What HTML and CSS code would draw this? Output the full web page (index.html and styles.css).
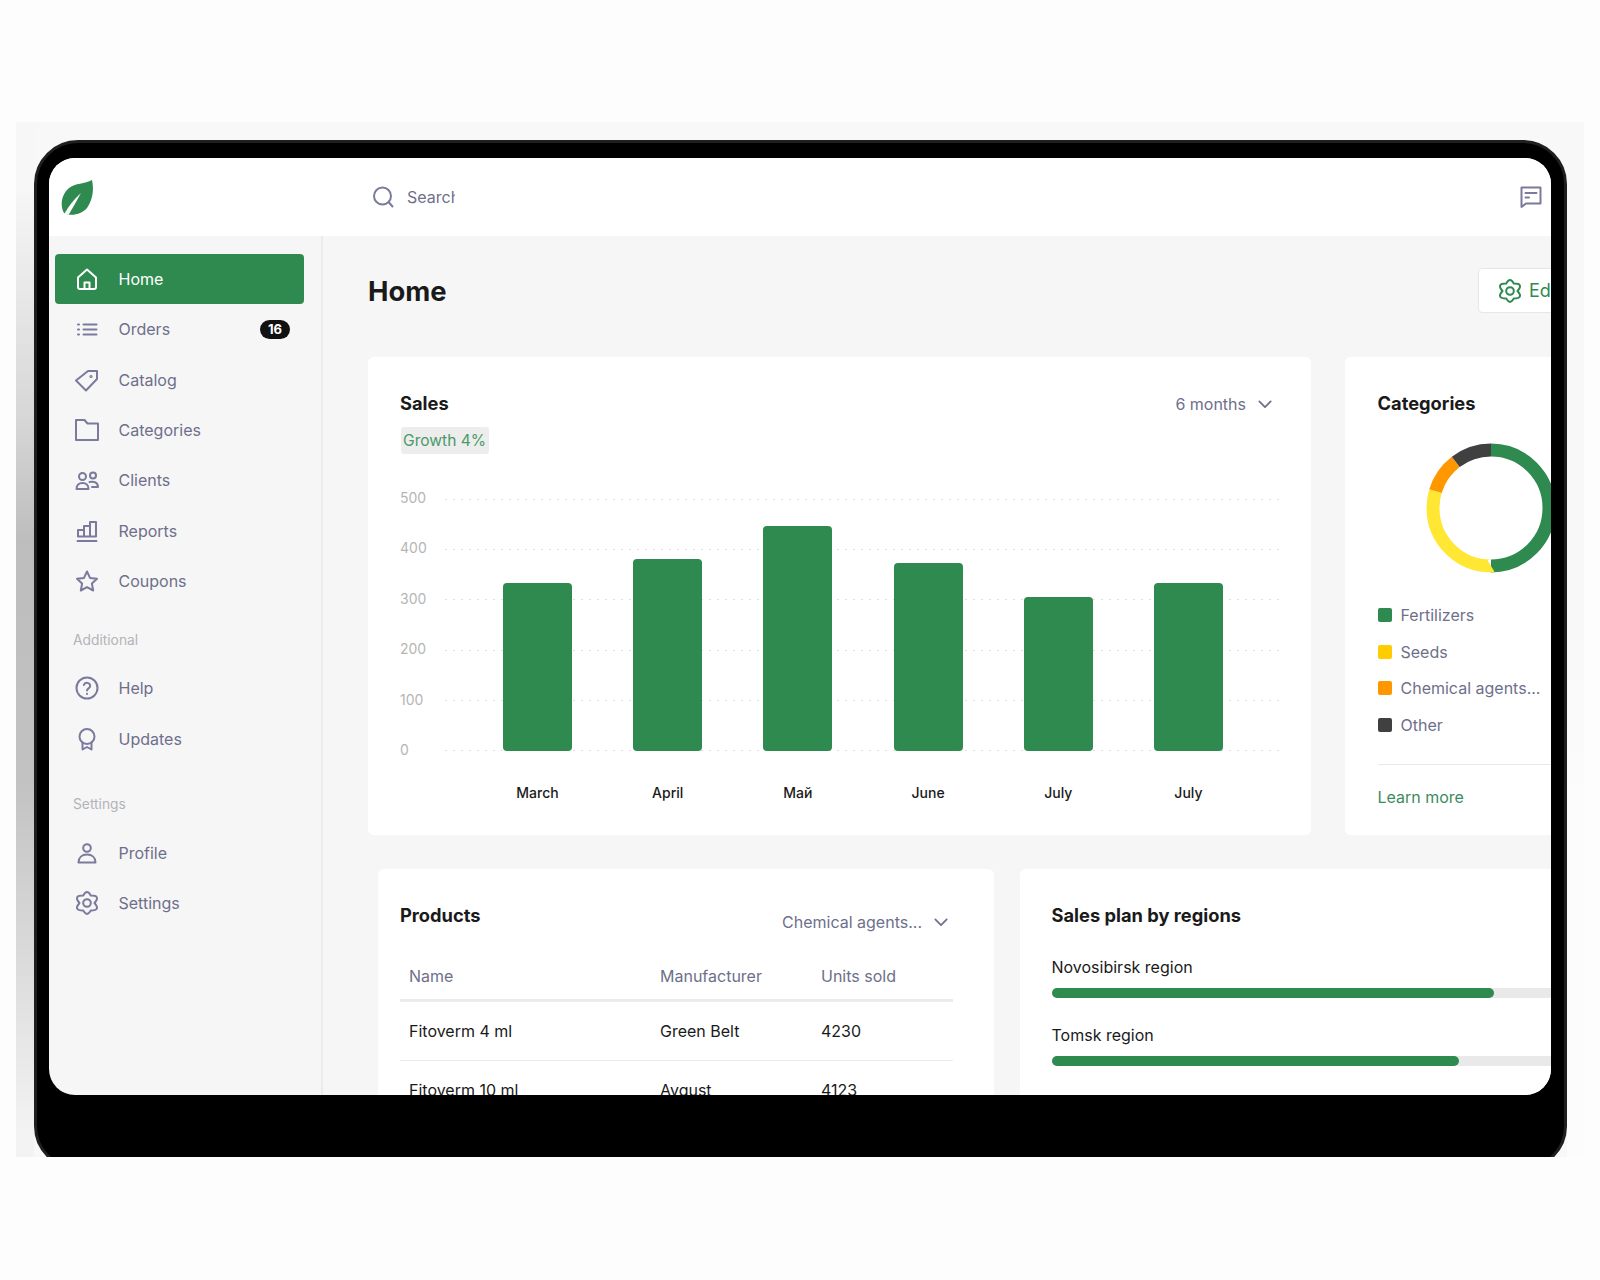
FILE: index.html
```html
<!DOCTYPE html>
<html lang="en">
<head>
  <meta charset="UTF-8">
  <title>Home</title>
  <link rel="stylesheet" href="styles.css">
</head>
<body>

<svg class="defs" width="0" height="0">
  <symbol id="gear" viewBox="0 0 24 24">
    <path d="M15.800 4.600Q12-2.500 8.200 4.600Q-2 4.500 4.500 12Q-2 19.500 8.200 19.400Q12 26.500 15.800 19.400Q26 19.500 19.500 12Q26 4.500 15.800 4.600z"/>
    <circle cx="12" cy="12" r="3.800"/>
  </symbol>
  <symbol id="chevron" viewBox="0 0 16 10">
    <path d="M1.500 1.500 8 8l6.500-6.500"/>
  </symbol>
</svg>

<div class="stage">
  <div class="device">
    <div class="screen">

      <header class="topbar">
        <div class="logo">
          <svg width="34" height="38" viewBox="0 0 34 38">
            <path class="leaf" d="M32 2C33.500 9 34 20 27 30 22 36 11 39 4 35 0 28 1 17 9 10 15 5 25 6 32 2z"/>
            <path class="vein" d="M4.500 35.500Q11 24 21 15Q15 26 8.500 37z"/>
          </svg>
        </div>
        <div class="search">
          <svg class="icon" viewBox="0 0 24 24"><circle cx="11.500" cy="11" r="8.500"/><path d="m18 17.500 3.500 4"/></svg>
          <span class="search-text">Search</span>
        </div>
        <svg class="icon chat" viewBox="0 0 24 24"><path d="M2.500 2.500h19v16H7l-4.500 3.500z"/><path d="M6.500 8h11M6.500 12.500h3.500"/></svg>
      </header>

      <div class="app">
        <nav class="sidebar">
          <a class="nav-item active">
            <svg class="icon" viewBox="0 0 24 24"><path d="M3 10.500 12 2.500l9 8V20a2 2 0 0 1-2 2H5a2 2 0 0 1-2-2z"/><path d="M9.500 22v-6.500h5V22"/></svg>
            Home
          </a>
          <a class="nav-item">
            <svg class="icon orders-icon" viewBox="0 0 24 24"><path d="M8.500 7.500h13M8.500 12.500h13M8.500 17.500h13M3 7.500h1M3 12.500h1M3 17.500h1"/></svg>
            Orders
            <span class="count">16</span>
          </a>
          <a class="nav-item">
            <svg class="icon" viewBox="0 0 24 24"><path d="M13 3h9v8L11 22.500 1 12.500z"/><circle cx="16" cy="8.500" r=".6"/></svg>
            Catalog
          </a>
          <a class="nav-item">
            <svg class="icon" viewBox="0 0 24 24"><path d="M1 2h8.500l3 3.500H23V22H1z"/></svg>
            Categories
          </a>
          <a class="nav-item">
            <svg class="icon" viewBox="0 0 24 24"><circle cx="7.500" cy="8.500" r="3.500"/><circle cx="18" cy="7.500" r="3"/><path d="M1.500 21c0-3.800 2.500-6 6-6s6 2.200 6 6z"/><path d="M14.500 14c4.500-1.200 8.500.800 8.500 5h-6"/></svg>
            Clients
          </a>
          <a class="nav-item">
            <svg class="icon" viewBox="0 0 24 24"><path d="M2.500 22h19M3 17.500V11h6v6.500M9 17.500V7h6v10.500M15 17.500V3h6v14.500M3 17.500h18"/></svg>
            Reports
          </a>
          <a class="nav-item">
            <svg class="icon" viewBox="0 0 24 24"><path d="m12 2.500 3 6.400 7 .9-5.100 4.800 1.300 6.900-6.200-3.400-6.200 3.400 1.300-6.900L2 9.800l7-.9z"/></svg>
            Coupons
          </a>

          <div class="nav-label">Additional</div>
          <a class="nav-item">
            <svg class="icon" viewBox="0 0 24 24"><circle cx="12" cy="12" r="10.500"/><path d="M8.800 9a3.300 3.300 0 0 1 6.400 1c0 2.200-3.200 2.500-3.200 4.500"/><path d="M12 17.800v.2"/></svg>
            Help
          </a>
          <a class="nav-item">
            <svg class="icon" viewBox="0 0 24 24"><circle cx="12" cy="9.500" r="7.500"/><path d="M7.500 15.500V22.500l4.500-2.500 4.500 2.500V15.500"/></svg>
            Updates
          </a>

          <div class="nav-label second">Settings</div>
          <a class="nav-item">
            <svg class="icon" viewBox="0 0 24 24"><circle cx="12" cy="7" r="3.800"/><path d="M3.500 21.500c0-5 3.500-8 8.500-8s8.500 3 8.500 8z"/></svg>
            Profile
          </a>
          <a class="nav-item">
            <svg class="icon"><use href="#gear"/></svg>
            Settings
          </a>
        </nav>

        <main class="main">
          <div class="page-head">
            <h1>Home</h1>
            <button class="edit-btn"><svg class="icon"><use href="#gear"/></svg>Edit</button>
          </div>

          <div class="row-top">
            <section class="card sales">
              <div class="card-head">
                <h2>Sales</h2>
                <div class="select">6 months <svg class="chev"><use href="#chevron"/></svg></div>
              </div>
              <span class="growth">Growth 4%</span>

              <div class="chart">
                <div class="ticks">
                  <span>500</span><span>400</span><span>300</span><span>200</span><span>100</span><span>0</span>
                </div>
                <div class="plot">
                  <div class="gridlines"><i></i><i></i><i></i><i></i><i></i><i></i></div>
                  <div class="bars">
                    <div class="bar" style="height:168px"></div>
                    <div class="bar" style="height:192px"></div>
                    <div class="bar" style="height:225px"></div>
                    <div class="bar" style="height:188px"></div>
                    <div class="bar" style="height:154px"></div>
                    <div class="bar" style="height:168px"></div>
                  </div>
                  <div class="months">
                    <span>March</span><span>April</span><span>Май</span><span>June</span><span>July</span><span>July</span>
                  </div>
                </div>
              </div>
            </section>

            <section class="card categories">
              <h2>Categories</h2>
              <svg class="donut" width="130" height="130" viewBox="0 0 130 130">
                <g transform="rotate(-90 65 65)">
                  <circle cx="65" cy="65" r="58" pathLength="100" stroke="#2f8a50" stroke-dasharray="50 50"/>
                  <circle cx="65" cy="65" r="58" pathLength="100" stroke="#ffe733" stroke-dasharray="29.7 70.3" stroke-dashoffset="-50"/>
                  <circle cx="65" cy="65" r="58" pathLength="100" stroke="#ff9800" stroke-dasharray="9.9 90.1" stroke-dashoffset="-79.7"/>
                  <circle cx="65" cy="65" r="58" pathLength="100" stroke="#404040" stroke-dasharray="10.4 89.6" stroke-dashoffset="-89.6"/>
                </g>
              </svg>
              <ul class="legend">
                <li><i class="swatch green"></i>Fertilizers</li>
                <li><i class="swatch yellow"></i>Seeds</li>
                <li><i class="swatch orange"></i>Chemical agents...</li>
                <li><i class="swatch dark"></i>Other</li>
              </ul>
              <a class="learn">Learn more</a>
            </section>
          </div>

          <div class="row-bottom">
            <section class="card products">
              <div class="card-head">
                <h2>Products</h2>
                <div class="select">Chemical agents... <svg class="chev"><use href="#chevron"/></svg></div>
              </div>
              <table>
                <thead>
                  <tr><th>Name</th><th>Manufacturer</th><th>Units sold</th></tr>
                </thead>
                <tbody>
                  <tr><td>Fitoverm 4 ml</td><td>Green Belt</td><td>4230</td></tr>
                  <tr><td>Fitoverm 10 ml</td><td>Avgust</td><td>4123</td></tr>
                </tbody>
              </table>
            </section>

            <section class="card regions">
              <h2>Sales plan by regions</h2>
              <div class="region">
                <div class="region-name">Novosibirsk region</div>
                <div class="track"><div class="fill" style="width:84.4%"></div></div>
              </div>
              <div class="region">
                <div class="region-name">Tomsk region</div>
                <div class="track"><div class="fill" style="width:77.7%"></div></div>
              </div>
            </section>
          </div>
        </main>
      </div>

    </div>
  </div>
</div>

</body>
</html>
```

FILE: styles.css
```css
* { box-sizing: border-box; margin: 0; padding: 0; }
body { background: #fdfdfd; height: 1280px; overflow: hidden; font-family: Inter, "Liberation Sans", sans-serif; font-size: 16px; color: #1a1a1a; }

.defs { position: absolute; }

/* backdrop and tablet frame */
.stage {
  margin: 122px 16px 0;
  height: 1035px;
  overflow: hidden;
  padding: 18px 17px 0 18px;
  background:
    linear-gradient(#f7f7f7 60px, #d6d6d6 300px, #bdbdbd 420px, #c2c2c2 660px, #f3f3f3 1010px) left top / 18px 100% no-repeat,
    linear-gradient(#f8f8f8 500px, #fcfcfc 700px) right top / 17px 100% no-repeat,
    #f8f8f8;
}
.device {
  height: 1030px;
  background: #000;
  border: 3px solid #1f1f1f;
  border-radius: 44px;
  padding: 15px 13px 72px 12px;
}
.screen {
  height: 937px;
  border-radius: 26px;
  overflow: hidden;
  background: #f6f6f6;
  display: flex;
  flex-direction: column;
}

.icon {
  width: 24px;
  height: 24px;
  flex-shrink: 0;
  fill: none;
  stroke: currentColor;
  stroke-width: 2;
  stroke-linecap: round;
  stroke-linejoin: round;
}

/* top bar */
.topbar {
  height: 78px;
  flex-shrink: 0;
  background: #fff;
  display: flex;
  align-items: center;
  padding-right: 8px;
  color: #7a7a9d;
}
.logo { width: 322px; padding-left: 11px; display: flex; }
.leaf { fill: #2f8a50; }
.vein { fill: #fff; }
.search { display: flex; align-items: center; gap: 12px; }
.search-text { width: 48px; overflow: hidden; color: #6e6f8b; white-space: nowrap; }
.chat { margin-left: auto; }

.app { flex: 1; display: flex; min-height: 0; }

/* sidebar */
.sidebar {
  width: 274px;
  flex-shrink: 0;
  border-right: 2px solid #ebebeb;
  padding: 18px 17px 0 6px;
}
.nav-item {
  height: 50.3px;
  display: flex;
  align-items: center;
  gap: 19.5px;
  padding: 0 14px 0 20px;
  border-radius: 4px;
  color: #6e6f8b;
}
.nav-item .icon { color: #7a7a9d; }
.nav-item.active { background: #2f8a50; color: #fff; }
.nav-item.active .icon { color: #fff; }
.count {
  margin-left: auto;
  width: 30px;
  height: 19px;
  border-radius: 10px;
  background: #111;
  color: #fff;
  font-size: 13px;
  font-weight: 700;
  line-height: 19px;
  text-align: center;
}
.nav-label {
  margin: 24px 0 13px 18px;
  height: 20px;
  line-height: 20px;
  font-size: 13.8px;
  color: #b3b3b8;
}
.nav-label.second { margin-top: 30px; margin-bottom: 14px; }

/* main column */
.main { flex: 1; min-width: 0; overflow: hidden; padding: 32px 0 0 45px; }
.page-head { width: 1240px; display: flex; justify-content: space-between; align-items: center; }
h1 { font-size: 27.4px; font-weight: 700; color: #1a1a1a; }
.edit-btn {
  width: 130px;
  height: 45px;
  display: flex;
  align-items: center;
  gap: 7px;
  padding-left: 19px;
  background: #fff;
  border: 1px solid #e6e6e6;
  border-radius: 4px;
  font: 18px Inter, "Liberation Sans", sans-serif;
  color: #2f8a50;
}

.row-top { width: 1240px; display: flex; gap: 34px; margin-top: 44px; }
.row-bottom { width: 1240px; display: flex; gap: 26px; margin-top: 34px; padding-left: 10px; }

.card { background: #fff; border-radius: 6px; padding-top: 35px; }
h2 { font-size: 18.3px; font-weight: 700; line-height: 24px; margin: -1px 0 1px; color: #1a1a1a; }
.card-head { display: flex; justify-content: space-between; }
.select { display: flex; align-items: center; gap: 12px; height: 24px; color: #6e6f8b; }
.chev { width: 14px; height: 9px; fill: none; stroke: #6e6f8b; stroke-width: 2; stroke-linecap: round; stroke-linejoin: round; }

/* sales chart */
.sales { width: 943px; height: 478px; padding-left: 32px; padding-right: 32px; }
.sales .select { margin-right: 7px; }
.growth {
  display: inline-block;
  margin: 11px 0 0 1px;
  height: 27px;
  width: 88px;
  padding-left: 2px;
  font-size: 15.6px;
  line-height: 27px;
  background: #ededed;
  border-radius: 3px;
  color: #4a9a68;
  white-space: nowrap;
}
.chart { display: flex; margin-top: 45px; }
.ticks {
  width: 45px;
  flex-shrink: 0;
  height: 272px;
  margin-top: -11px;
  display: flex;
  flex-direction: column;
  justify-content: space-between;
  font-size: 14px;
  line-height: 20px;
  color: #b5b5b5;
}
.plot { position: relative; width: 835px; flex-shrink: 0; }
.gridlines {
  position: absolute;
  left: 0;
  right: 0;
  top: 0;
  height: 252px;
  display: flex;
  flex-direction: column;
  justify-content: space-between;
}
.gridlines i {
  display: block;
  height: 1px;
  background: repeating-linear-gradient(to right, #dfdfdf 0 2px, transparent 2px 8px);
}
.bars, .months {
  position: relative;
  display: grid;
  grid-template-columns: repeat(6, 69px);
  column-gap: 61.2px;
  padding-left: 58px;
}
.bars { height: 252px; align-items: end; }
.bar { background: #2f8a50; border-radius: 4px; }
.months { margin-top: 32px; font-size: 14px; font-weight: 500; line-height: 20px; color: #1a1a1a; }
.months span { text-align: center; }

/* categories */
.categories { width: 263px; height: 478px; padding-left: 32.5px; }
.donut { display: block; margin: 28px 0 0 48px; }
.donut circle { fill: none; stroke-width: 13; }
.legend { list-style: none; margin-top: 32px; display: flex; flex-direction: column; gap: 16.6px; }
.legend li { display: flex; align-items: center; gap: 9px; line-height: 20px; color: #6e6f8b; white-space: nowrap; }
.swatch { width: 14px; height: 14px; border-radius: 2px; }
.swatch.green { background: #2f8a50; }
.swatch.yellow { background: #ffcc00; }
.swatch.orange { background: #ff9800; }
.swatch.dark { background: #404040; }
.learn {
  display: block;
  margin-top: 29px;
  padding-top: 22px;
  border-top: 1px solid #e8e8e8;
  line-height: 20px;
  color: #3d8b5e;
}

/* products */
.products { width: 616px; padding: 35px 41px 0 22px; }
.products .card-head { height: 48px; }
.products .select { margin-top: 6px; margin-right: 5px; }
table { width: 100%; border-collapse: collapse; table-layout: fixed; }
th, td { text-align: left; padding-left: 9px; font-weight: 400; }
th { height: 48px; padding-top: 2px; border-bottom: 3px solid #ebebeb; color: #6e6f8b; }
td { height: 60px; border-bottom: 1px solid #ebebeb; color: #1a1a1a; }
th:nth-child(1) { width: 251px; }
th:nth-child(2) { width: 161px; }

/* regions */
.regions { width: 588px; padding: 35px 32px 0 31.5px; }
.regions h2 { margin-bottom: 30px; }
.region { margin-bottom: 27px; }
.region-name { line-height: 20px; color: #1a1a1a; }
.track { margin-top: 11px; height: 10px; border-radius: 5px; background: #e9e9e9; }
.fill { height: 100%; border-radius: 5px; background: #2f8a50; }
```
